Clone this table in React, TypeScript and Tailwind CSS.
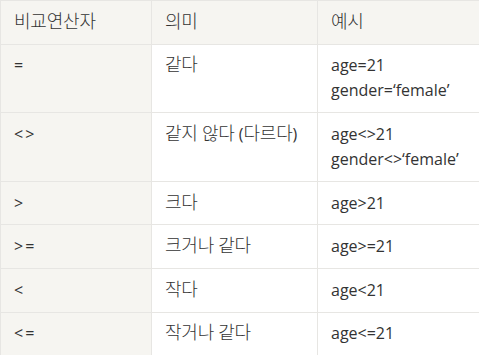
import React from 'react';

const rows: { op: string; meaning: string; example: string[] }[] = [
  { op: '=', meaning: '같다', example: ['age=21', 'gender=‘female’'] },
  { op: '<>', meaning: '같지 않다 (다르다)', example: ['age<>21', 'gender<>‘female’'] },
  { op: '>', meaning: '크다', example: ['age>21'] },
  { op: '>=', meaning: '크거나 같다', example: ['age>=21'] },
  { op: '<', meaning: '작다', example: ['age<21'] },
  { op: '<=', meaning: '작거나 같다', example: ['age<=21'] },
];

const cell = 'border border-[#e7e6e3] align-top px-[13px] py-[8.8px] text-left font-normal';

// hangul gets drawn a bit bigger, like the original's korean face
const Ko = ({ text }: { text: string }) => (
  <>
    {text.split(/([\uAC00-\uD7A3]+)/).map((part, i) =>
      /[\uAC00-\uD7A3]/.test(part) ? (
        <span key={i} className="text-[18px] leading-none font-light tracking-[-0.2px]">
          {part}
        </span>
      ) : (
        <span key={i}>{part}</span>
      )
    )}
  </>
);

export default function App() {
  return (
    <div
      className="w-[479px] h-[355px] overflow-hidden bg-white text-[16px] leading-[25px] text-[#333333]"
      style={{ fontFamily: '"Open Sans", "Noto Sans CJK KR", sans-serif' }}
    >
      <table className="border-collapse table-fixed w-[560px]">
        <colgroup>
          <col className="w-[151px]" />
          <col className="w-[166px]" />
          <col className="w-[243px]" />
        </colgroup>
        <thead>
          <tr className="bg-[#f6f5f1]">
            <th className={cell}><Ko text="비교연산자" /></th>
            <th className={cell}><Ko text="의미" /></th>
            <th className={cell}><Ko text="예시" /></th>
          </tr>
        </thead>
        <tbody>
          {rows.map((r) => (
            <tr key={r.op}>
              <td className={`${cell} bg-[#f6f5f1] tracking-[2px]`}>{r.op}</td>
              <td className={cell}><Ko text={r.meaning} /></td>
              <td className={cell}>
                {r.example.map((e) => (
                  <div key={e}>{e}</div>
                ))}
              </td>
            </tr>
          ))}
        </tbody>
      </table>
    </div>
  );
}
